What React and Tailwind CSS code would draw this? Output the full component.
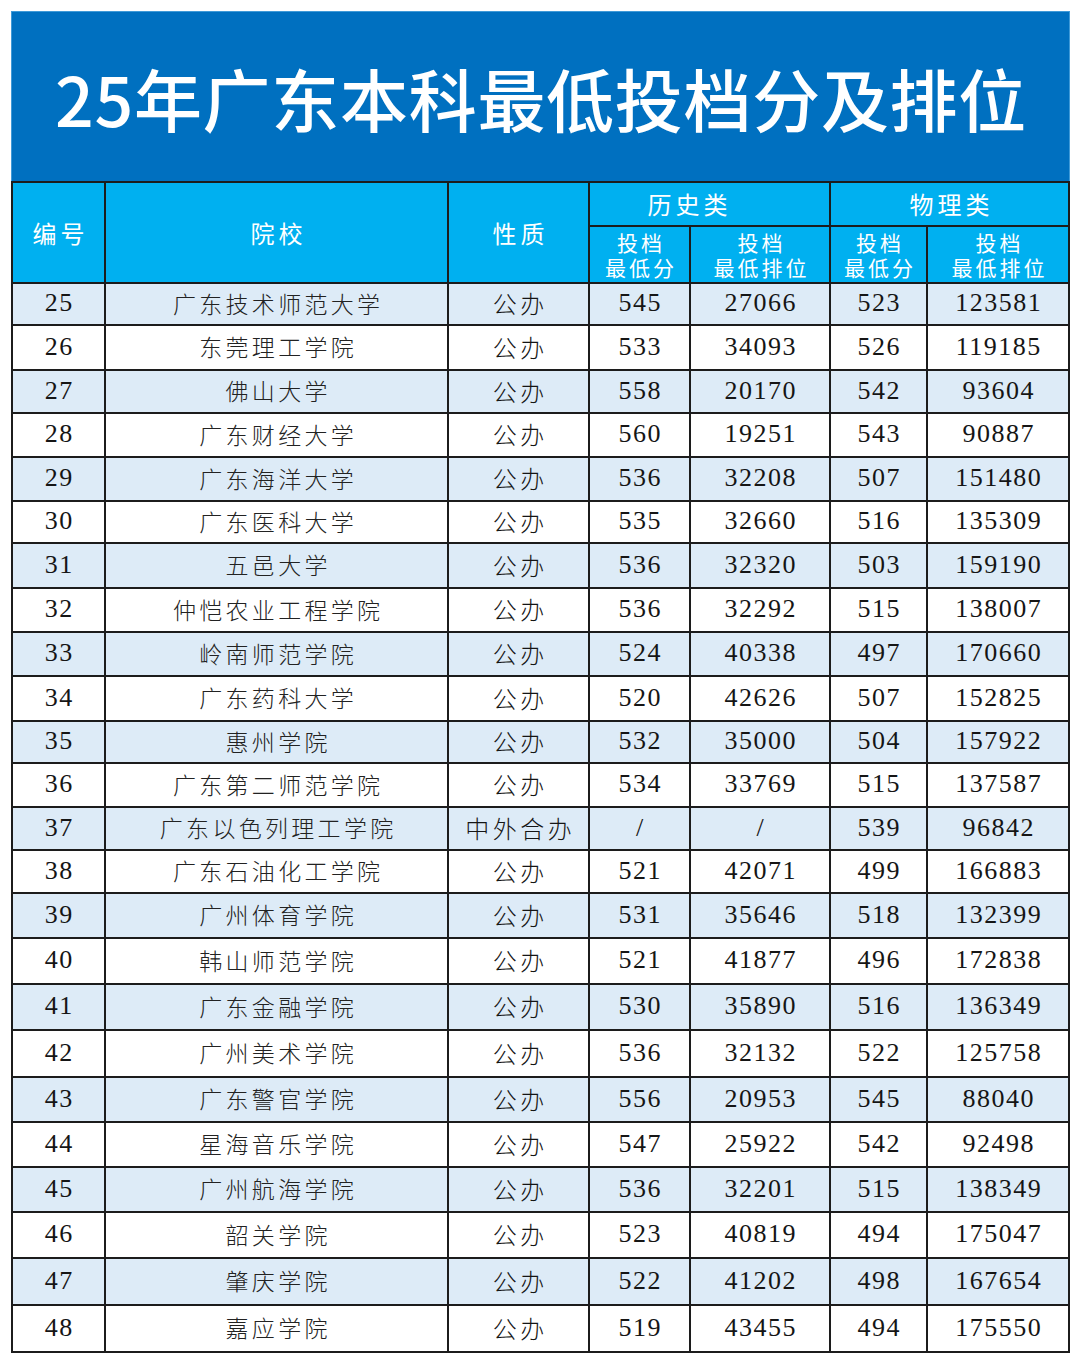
import React from "react";

const rows = [
  ["25", "广东技术师范大学", "公办", "545", "27066", "523", "123581"],
  ["26", "东莞理工学院", "公办", "533", "34093", "526", "119185"],
  ["27", "佛山大学", "公办", "558", "20170", "542", "93604"],
  ["28", "广东财经大学", "公办", "560", "19251", "543", "90887"],
  ["29", "广东海洋大学", "公办", "536", "32208", "507", "151480"],
  ["30", "广东医科大学", "公办", "535", "32660", "516", "135309"],
  ["31", "五邑大学", "公办", "536", "32320", "503", "159190"],
  ["32", "仲恺农业工程学院", "公办", "536", "32292", "515", "138007"],
  ["33", "岭南师范学院", "公办", "524", "40338", "497", "170660"],
  ["34", "广东药科大学", "公办", "520", "42626", "507", "152825"],
  ["35", "惠州学院", "公办", "532", "35000", "504", "157922"],
  ["36", "广东第二师范学院", "公办", "534", "33769", "515", "137587"],
  ["37", "广东以色列理工学院", "中外合办", "/", "/", "539", "96842"],
  ["38", "广东石油化工学院", "公办", "521", "42071", "499", "166883"],
  ["39", "广州体育学院", "公办", "531", "35646", "518", "132399"],
  ["40", "韩山师范学院", "公办", "521", "41877", "496", "172838"],
  ["41", "广东金融学院", "公办", "530", "35890", "516", "136349"],
  ["42", "广州美术学院", "公办", "536", "32132", "522", "125758"],
  ["43", "广东警官学院", "公办", "556", "20953", "545", "88040"],
  ["44", "星海音乐学院", "公办", "547", "25922", "542", "92498"],
  ["45", "广州航海学院", "公办", "536", "32201", "515", "138349"],
  ["46", "韶关学院", "公办", "523", "40819", "494", "175047"],
  ["47", "肇庆学院", "公办", "522", "41202", "498", "167654"],
  ["48", "嘉应学院", "公办", "519", "43455", "494", "175550"],
];

const sans = "font-['Noto_Sans_CJK_SC','Noto_Sans',sans-serif]";
const serif = "font-['Liberation_Serif','Noto_Sans_CJK_SC',serif]";

function HeadCell({ className = "", children }) {
  return (
    <div
      className={`bg-[#00b0f0] text-white flex flex-col items-center justify-center ${sans} ${className}`}
    >
      {children}
    </div>
  );
}

function SubHead({ l1, l2 }) {
  return (
    <HeadCell className="text-[21px] leading-[25px]">
      <span className="tracking-[3px] pl-[3px]">{l1}</span>
      <span className="tracking-[3px] pl-[3px]">{l2}</span>
    </HeadCell>
  );
}

export default function App() {
  return (
    <div className="bg-white w-[1080px] min-h-[1362px] pt-[11px]">
      <div className="ml-[11px] w-[1059px]">
        <div
          className={`h-[170px] bg-[#0070c0] border border-b-0 border-[#3f9ad8] flex items-center justify-center pt-[2px] ${sans}`}
        >
          <h1 className="text-white text-[68px] font-medium leading-none tracking-[0.7px] pl-[1px]">
            25年广东本科最低投档分及排位
          </h1>
        </div>
        <div className="grid grid-cols-[91px_341px_139px_99px_138px_95px_140px] grid-rows-[42px_55px_40px_43px_41px_42px_42px_40px_43px_42px_42px_43px_40px_42px_41px_41px_43px_44px_44px_45px_43px_43px_43px_44px_45px_45px] gap-[2px] p-[2px] bg-[#1c1c1c]">
          <HeadCell className="row-span-2 text-[24px]">
            <span className="tracking-[4px] pl-[4px]">编号</span>
          </HeadCell>
          <HeadCell className="row-span-2 text-[24px]">
            <span className="tracking-[4px] pl-[4px]">院校</span>
          </HeadCell>
          <HeadCell className="row-span-2 text-[24px]">
            <span className="tracking-[4px] pl-[4px]">性质</span>
          </HeadCell>
          <HeadCell className="col-span-2 text-[24px] pr-[44px]">
            <span className="tracking-[4px] pl-[4px]">历史类</span>
          </HeadCell>
          <HeadCell className="col-span-2 text-[24px]">
            <span className="tracking-[4px] pl-[4px]">物理类</span>
          </HeadCell>
          <SubHead l1="投档" l2="最低分" />
          <SubHead l1="投档" l2="最低排位" />
          <SubHead l1="投档" l2="最低分" />
          <SubHead l1="投档" l2="最低排位" />

          {rows.map((r, i) => {
            const bg = i % 2 === 0 ? "bg-[#ddebf7]" : "bg-white";
            return (
              <React.Fragment key={r[0]}>
                <div className={`${bg} flex items-center justify-center pb-[3px] ${serif} text-[26px] text-[#151515]`}>
                  <span className="tracking-[1.5px] pl-[1.5px]">{r[0]}</span>
                </div>
                <div className={`${bg} flex items-center justify-center pb-[2px] ${sans} font-light text-[23px] text-[#222]`}>
                  <span className="tracking-[3.3px] pl-[3.3px]">{r[1]}</span>
                </div>
                <div className={`${bg} flex items-center justify-center pb-[2px] ${sans} font-light text-[24px] text-[#151515]`}>
                  <span className="tracking-[3.5px] pl-[3.5px]">{r[2]}</span>
                </div>
                {r.slice(3).map((v, j) => (
                  <div
                    key={j}
                    className={`${bg} flex items-center justify-center pb-[3px] ${serif} text-[26px] text-[#151515]`}
                  >
                    <span className="tracking-[1.5px] pl-[1.5px]">{v}</span>
                  </div>
                ))}
              </React.Fragment>
            );
          })}
        </div>
      </div>
    </div>
  );
}
